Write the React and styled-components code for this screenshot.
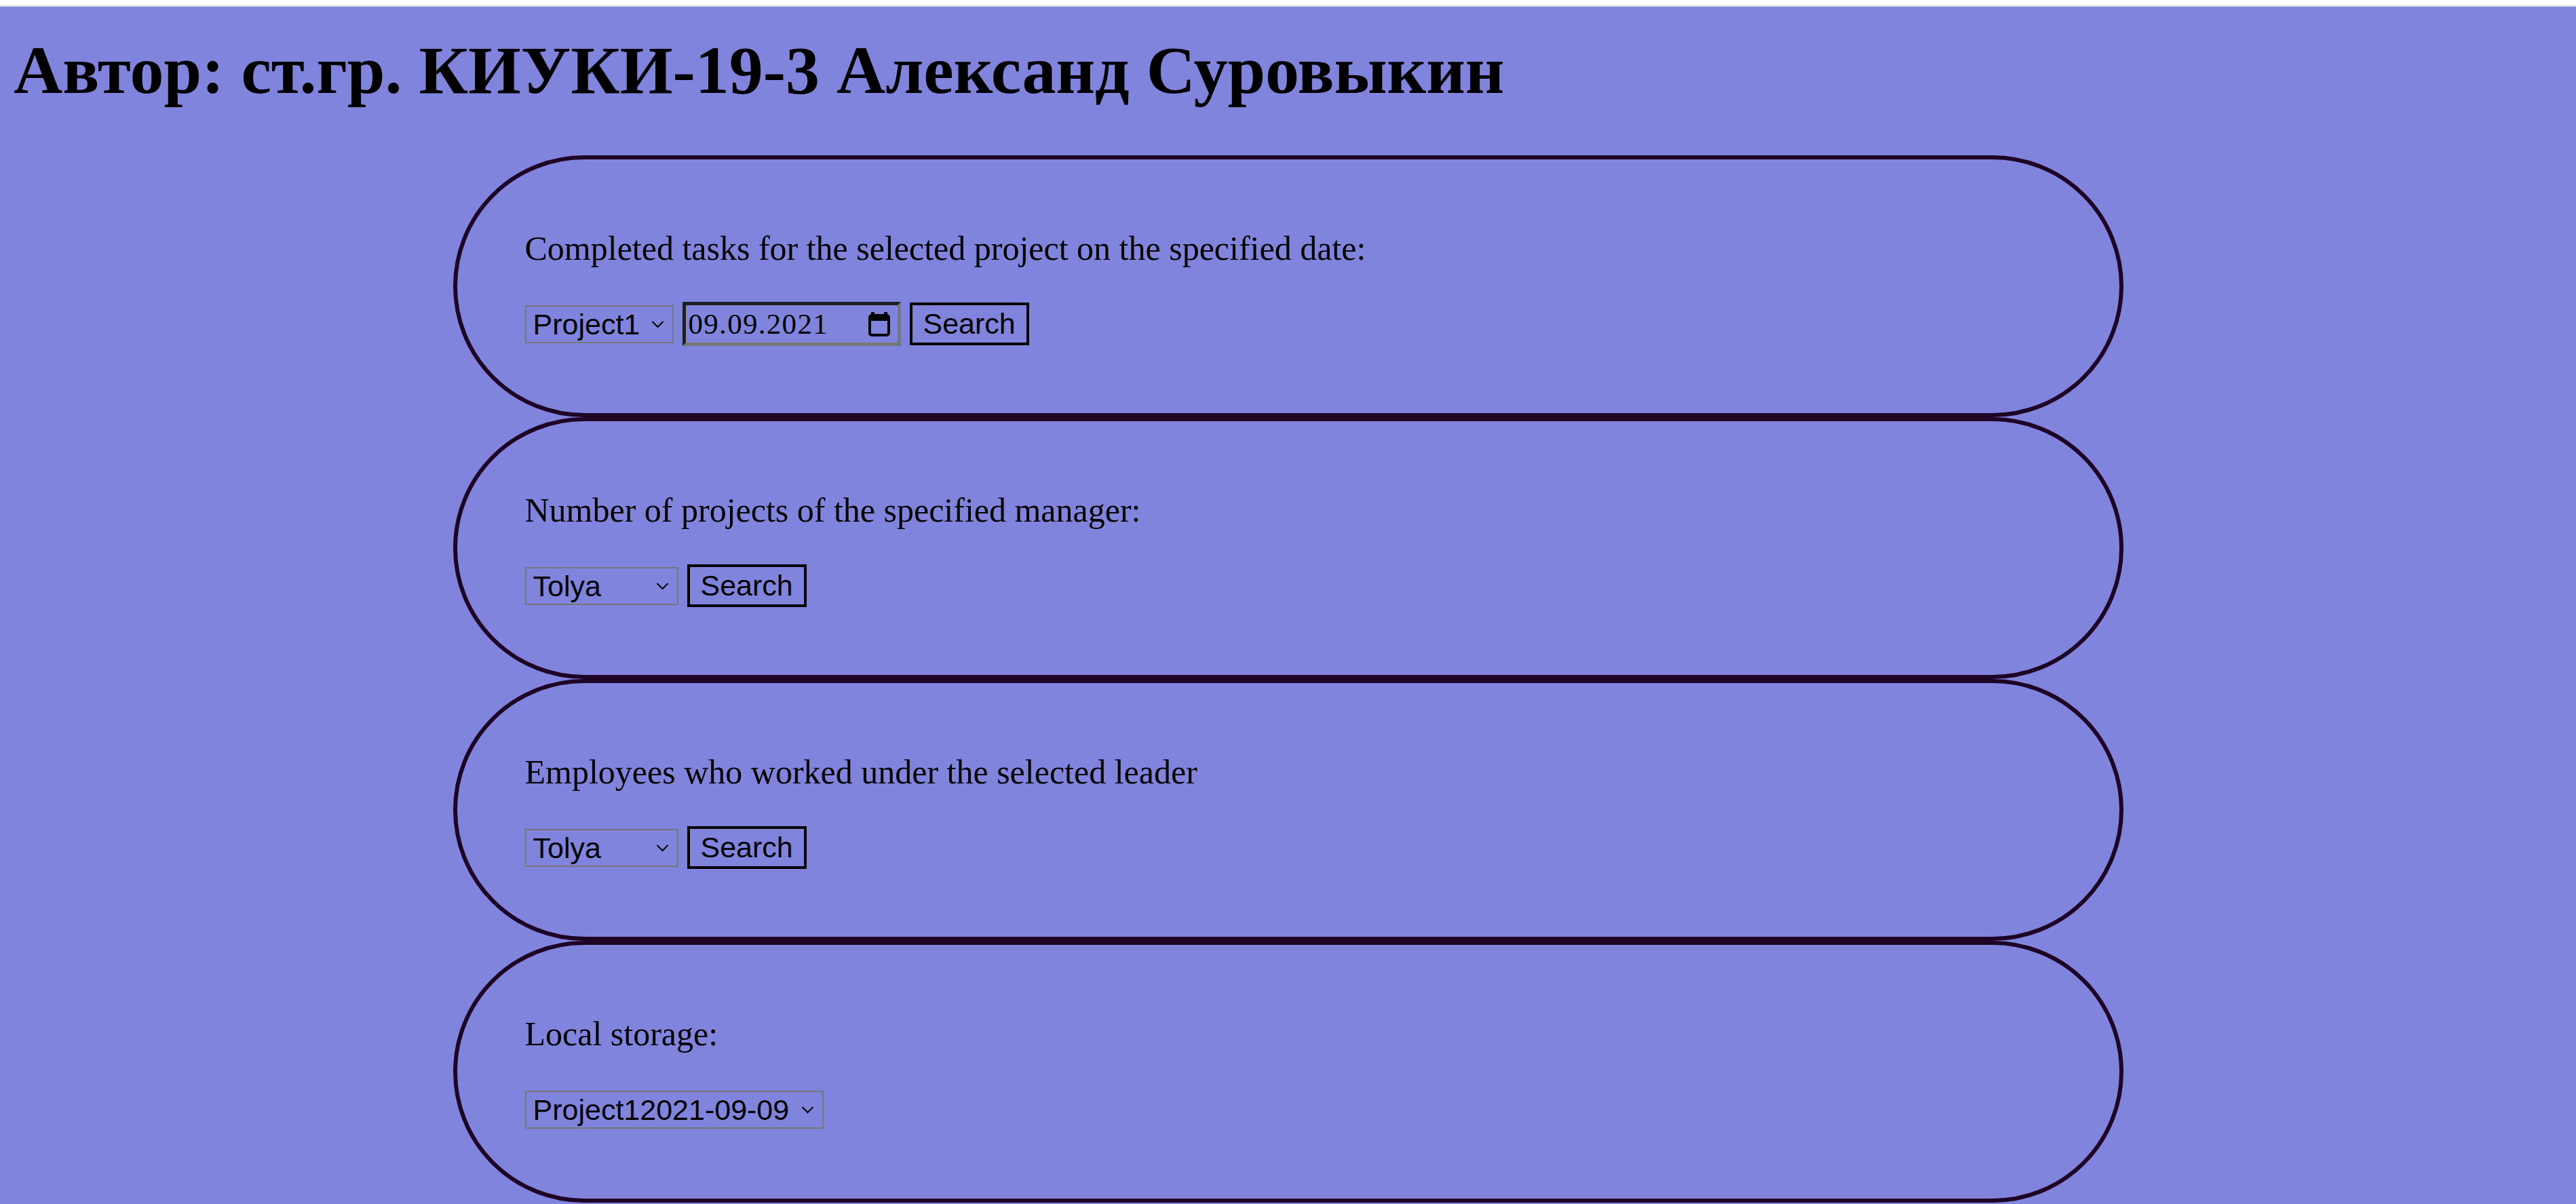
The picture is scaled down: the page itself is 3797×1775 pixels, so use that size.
import React from "react";
import styled, { createGlobalStyle } from "styled-components";

const GlobalStyle = createGlobalStyle`
  html, body {
    margin: 0;
    padding: 0;
    background: #8084dc;
  }
  body {
    font-family: "Liberation Serif", "Times New Roman", serif;
    color: #000;
  }
`;

const Page = styled.div`
  min-height: 100vh;
  background: #8084dc;
  display: flex;
  flex-direction: column;
`;

const TopStrip = styled.div`
  height: 8px;
  background: #ffffff;
  border-bottom: 2px solid #d9d9d9;
`;

const Title = styled.h1`
  margin: 36px 0 68px;
  padding-left: 20px;
  font-family: "Liberation Serif", "Times New Roman", serif;
  font-weight: 700;
  font-size: 100px;
  line-height: 115px;
  white-space: nowrap;
`;

const CardList = styled.main`
  width: 2462px;
  margin: 0 auto;
  display: flex;
  flex-direction: column;
`;

const Card = styled.section`
  border: 6px solid #1e0526;
  border-radius: 9999px;
  padding: 102px 100px 99px;
  display: flex;
  flex-direction: column;
  gap: 50px;
`;

const Label = styled.p`
  margin: 0;
  font-family: "Liberation Serif", "Times New Roman", serif;
  font-size: 50px;
  line-height: 58px;
`;

const Row = styled.div`
  display: flex;
  align-items: center;
  gap: 13px;
  min-height: 65px;
`;

const SelectBox = styled.label`
  box-sizing: border-box;
  width: ${(p) => p.$width}px;
  height: 56px;
  border: 2px solid #767676;
  display: flex;
  align-items: center;
  padding: 0 12px 0 10px;
  gap: 10px;
`;

const NativeSelect = styled.select`
  appearance: none;
  -webkit-appearance: none;
  flex: 1;
  min-width: 0;
  border: none;
  outline: none;
  background: transparent;
  padding: 0;
  margin: 0;
  font-family: "Liberation Sans", Arial, sans-serif;
  font-size: 43px;
  line-height: normal;
  color: #000;
`;

const Chevron = styled.svg`
  flex: none;
  width: 19px;
  height: 12px;
`;

const DateBox = styled.label`
  box-sizing: border-box;
  width: 322px;
  height: 65px;
  border-style: solid;
  border-width: 5px;
  border-color: #1f1f1f #767676 #767676 #1f1f1f;
  display: flex;
  align-items: center;
  padding: 0 11px 0 4px;
`;

const DateText = styled.input`
  flex: 1;
  min-width: 0;
  border: none;
  outline: none;
  background: transparent;
  padding: 0;
  margin: 0;
  font-family: "Liberation Serif", "Times New Roman", serif;
  font-size: 43px;
  letter-spacing: 1.3px;
  color: #000;
`;

const CalendarIcon = styled.svg`
  flex: none;
  width: 32px;
  height: 36px;
`;

const SearchButton = styled.button`
  box-sizing: border-box;
  height: 63px;
  border: 4px solid #000;
  background: transparent;
  padding: 0 16px;
  margin: 0;
  font-family: "Liberation Sans", Arial, sans-serif;
  font-size: 43px;
  line-height: normal;
  color: #000;
  cursor: pointer;
`;

function Select({ width, value }) {
  return (
    <SelectBox $width={width}>
      <NativeSelect defaultValue={value}>
        <option value={value}>{value}</option>
      </NativeSelect>
      <Chevron viewBox="0 0 19 12" aria-hidden="true">
        <polyline
          points="1.5,2 9.5,10 17.5,2"
          fill="none"
          stroke="#000"
          strokeWidth="2"
        />
      </Chevron>
    </SelectBox>
  );
}

function DateField({ value }) {
  return (
    <DateBox>
      <DateText type="text" readOnly value={value} />
      <CalendarIcon viewBox="0 0 32 36" aria-hidden="true">
        <rect x="4" y="0" width="5" height="7" rx="1" fill="#000" />
        <rect x="23" y="0" width="5" height="7" rx="1" fill="#000" />
        <rect
          x="2"
          y="5"
          width="28"
          height="29"
          rx="3"
          fill="none"
          stroke="#000"
          strokeWidth="4"
        />
        <rect x="2" y="5" width="28" height="8" fill="#000" />
      </CalendarIcon>
    </DateBox>
  );
}

export default function App() {
  return (
    <Page>
      <GlobalStyle />
      <TopStrip />
      <Title>Автор: ст.гр. КИУКИ-19-3 Александ Суровыкин</Title>
      <CardList>
        <Card>
          <Label>Completed tasks for the selected project on the specified date:</Label>
          <Row>
            <Select width={219} value="Project1" />
            <DateField value="09.09.2021" />
            <SearchButton>Search</SearchButton>
          </Row>
        </Card>
        <Card>
          <Label>Number of projects of the specified manager:</Label>
          <Row>
            <Select width={226} value="Tolya" />
            <SearchButton>Search</SearchButton>
          </Row>
        </Card>
        <Card>
          <Label>Employees who worked under the selected leader</Label>
          <Row>
            <Select width={226} value="Tolya" />
            <SearchButton>Search</SearchButton>
          </Row>
        </Card>
        <Card>
          <Label>Local storage:</Label>
          <Row>
            <Select width={440} value="Project12021-09-09" />
          </Row>
        </Card>
      </CardList>
    </Page>
  );
}
